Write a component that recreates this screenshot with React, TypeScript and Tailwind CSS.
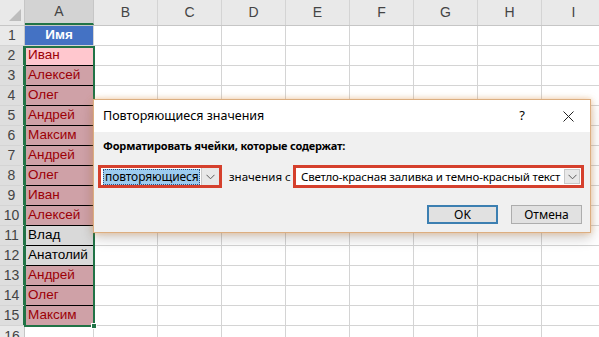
import React from "react";

const cols = ["B", "C", "D", "E", "F", "G", "H", "I"];

const names: { name: string; dup: boolean }[] = [
  { name: "Иван", dup: true },
  { name: "Алексей", dup: true },
  { name: "Олег", dup: true },
  { name: "Андрей", dup: true },
  { name: "Максим", dup: true },
  { name: "Андрей", dup: true },
  { name: "Олег", dup: true },
  { name: "Иван", dup: true },
  { name: "Алексей", dup: true },
  { name: "Влад", dup: false },
  { name: "Анатолий", dup: false },
  { name: "Андрей", dup: true },
  { name: "Олег", dup: true },
  { name: "Максим", dup: true },
];

function Chevron() {
  return (
    <svg width="9" height="6" viewBox="0 0 9 6" className="text-[#5a5a5a]">
      <path d="M0.5 0.8 L4.5 4.8 L8.5 0.8" fill="none" stroke="currentColor" strokeWidth="1" />
    </svg>
  );
}

function cellClass(i: number, dup: boolean) {
  if (i === 0) return "bg-[#ffc7ce] text-[#9c0006]";
  if (dup) return "bg-[#cfa1a7] text-[#9c0006]";
  return "bg-[#d9d9d9] text-black";
}

export default function App() {
  return (
    <div className="relative w-[599px] h-[337px] overflow-hidden bg-white font-['Liberation_Sans',sans-serif]">
      {/* column headers */}
      <div className="flex h-[26px] bg-[#e9e9e9] border-b border-[#c6c6c6] text-[#444] text-[14px]">
        <div className="w-[25px] shrink-0 border-r border-[#c6c6c6] flex items-end justify-end pr-[3px] pb-[4px]">
          <svg width="12" height="12" viewBox="0 0 12 12">
            <polygon points="12,0 12,12 0,12" fill="#bdbdbd" />
          </svg>
        </div>
        <div className="w-[69px] shrink-0 bg-[#d3d3d3] border-r border-[#c6c6c6] border-b-2 border-b-[#217346] flex items-center justify-center">A</div>
        {cols.map((c) => (
          <div key={c} className="w-[64px] shrink-0 border-r border-[#d4d4d4] flex items-center justify-center">{c}</div>
        ))}
      </div>

      {/* row 1 */}
      <div className="flex h-[20px] border-b border-[#d4d4d4]">
        <div className="w-[25px] shrink-0 bg-[#e9e9e9] border-r border-[#c6c6c6] text-[#444] text-[14px] flex items-center justify-center">1</div>
        <div className="w-[69px] shrink-0 bg-[#4472c4] text-white font-bold text-[13.5px] flex items-center justify-center border-r border-[#d4d4d4]">Имя</div>
        {cols.map((c) => (
          <div key={c} className="w-[64px] shrink-0 border-r border-[#d4d4d4]" />
        ))}
      </div>

      {names.map((n, i) => (
        <div key={i} className="flex h-[20px] border-b border-[#d4d4d4]">
          <div className="w-[25px] shrink-0 bg-[#dedede] border-r-2 border-[#217346] text-[#444] text-[14px] flex items-center justify-center">{i + 2}</div>
          <div className={`w-[69px] shrink-0 text-[13.5px] pl-[3px] flex items-center border-b border-b-black -mb-px ${cellClass(i, n.dup)}`}>{n.name}</div>
          {cols.map((c) => (
            <div key={c} className="w-[64px] shrink-0 border-r border-[#d4d4d4]" />
          ))}
        </div>
      ))}

      <div className="flex h-[20px] border-b border-[#d4d4d4]">
        <div className="w-[25px] shrink-0 bg-[#e9e9e9] border-r border-[#c6c6c6] text-[#444] text-[14px] flex items-start justify-center leading-[20px]">16</div>
        <div className="w-[69px] shrink-0 border-r border-[#d4d4d4]" />
        {cols.map((c) => (
          <div key={c} className="w-[64px] shrink-0 border-r border-[#d4d4d4]" />
        ))}
      </div>

      {/* selection outline */}
      <div className="absolute left-[24px] top-[46px] w-[71px] h-[281px] border-2 border-[#217346]" />
      <div className="absolute left-[91px] top-[323px] w-[6px] h-[6px] bg-[#217346] border border-white" />

      {/* dialog */}
      <div className="absolute left-[93px] top-[99px] w-[498px] h-[134px] border border-[#dcae80] bg-[#f0f0f0] shadow-[0_0_6px_rgba(240,160,80,0.55),0_6px_12px_rgba(0,0,0,0.18)] font-['Noto_Sans',sans-serif] text-[12px] text-black">
        <div className="h-[32px] bg-white flex items-center pl-[9px] pr-[16px]">
          <span className="text-[12.5px]">Повторяющиеся значения</span>
          <span className="ml-auto mr-[38px] text-[13px]">?</span>
          <svg width="11" height="11" viewBox="0 0 11 11">
            <path d="M0.5 0.5 L10.5 10.5 M10.5 0.5 L0.5 10.5" stroke="#222" strokeWidth="1" />
          </svg>
        </div>
        <div className="pl-[9px] pt-[6px] font-bold text-[11px] tracking-[-0.2px] leading-[16px] whitespace-nowrap">Форматировать ячейки, которые содержат:</div>
        <div className="flex items-center mt-[11px] pl-[4px]">
          <div className="w-[124px] h-[23px] shrink-0 border-[3px] border-[#d5402d] flex items-center bg-white pl-[2px]">
            <span className="bg-[#9ccbef] border border-dotted border-[#2b4f80] leading-[14px] px-[1px] w-[97px] text-[12px] tracking-[-0.1px] whitespace-nowrap">повторяющиеся</span>
            <div className="ml-auto w-[18px] h-full bg-[#e8e8e8] border-l border-[#c8c8c8] flex items-center justify-center">
              <Chevron />
            </div>
          </div>
          <span className="ml-[7px] text-[11.5px] whitespace-nowrap">значения с</span>
          <div className="ml-auto mr-[6px] w-[291px] h-[23px] shrink-0 border-[3px] border-[#d5402d] flex items-center bg-white pl-[5px]">
            <span className="text-[11.5px] tracking-[-0.15px] whitespace-nowrap">Светло-красная заливка и темно-красный текст</span>
            <div className="ml-auto mr-[1px] w-[16px] h-[15px] bg-[#e8e8e8] border border-[#c8c8c8] flex items-center justify-center">
              <Chevron />
            </div>
          </div>
        </div>
        <div className="flex justify-end gap-[13px] pr-[8px] mt-[17px]">
          <div className="w-[71px] h-[19px] border-2 border-[#3c7fb1] bg-[#e1e1e1] flex items-center justify-center">OK</div>
          <div className="w-[71px] h-[19px] border border-[#adadad] bg-[#e1e1e1] flex items-center justify-center">Отмена</div>
        </div>
      </div>
    </div>
  );
}
